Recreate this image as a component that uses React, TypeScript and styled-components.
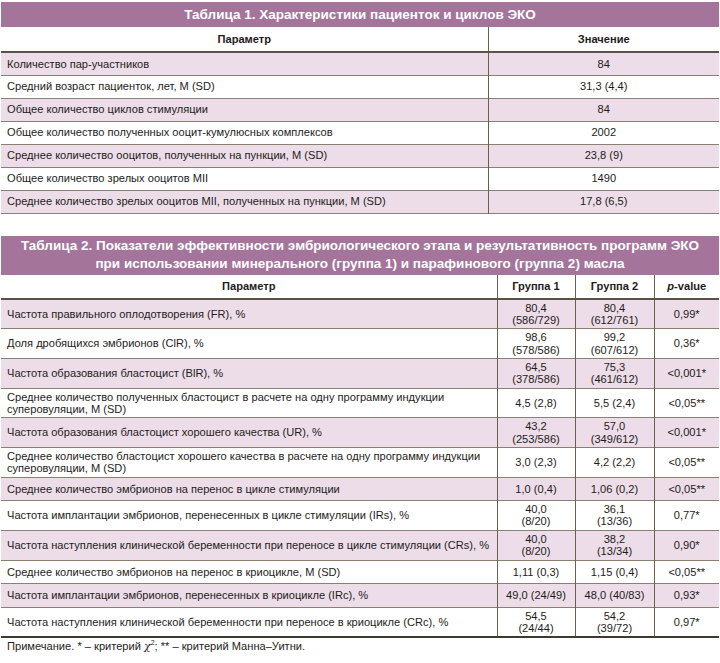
import React from 'react'
import styled, { createGlobalStyle } from 'styled-components'

const GlobalStyle = createGlobalStyle`
  html, body {
    margin: 0;
    padding: 0;
    background: #ffffff;
  }
  body {
    font-family: "Liberation Sans", Arial, sans-serif;
    color: #1e1c1a;
  }
`

const Page = styled.div`
  display: flex;
  flex-flow: column nowrap;
  gap: 22px;
  width: 718px;
  padding: 2px 0 0 1px;
`

const Block = styled.section`
  display: flex;
  flex-flow: column nowrap;
`

const TitleBar = styled.div<{ $lines: number }>`
  display: flex;
  flex-flow: column nowrap;
  justify-content: center;
  height: ${({ $lines }) => ($lines > 1 ? 39 : 25)}px;
  background-color: #a5749b;
  color: #ffffff;
  font-size: 13.5px;
  font-weight: bold;
  line-height: 18px;
  text-align: center;
`

const Table = styled.table`
  width: 100%;
  border-collapse: collapse;
  table-layout: fixed;
  font-size: 11.1px;
  line-height: 12.35px;
`

const HeadRow = styled.tr<{ $h: number }>`
  height: ${({ $h }) => $h}px;
  border-bottom: 2px solid #5b5247;
`

const HeadCell = styled.th<{ $last?: boolean }>`
  padding: 2px 6px;
  font-weight: bold;
  text-align: center;
  border-right: ${({ $last }) => ($last ? 'none' : '1.5px solid #6a6052')};
`

const Row = styled.tr<{ $pink: boolean; $h: number; $thick?: boolean }>`
  height: ${({ $h }) => $h}px;
  background-color: ${({ $pink }) => ($pink ? '#ecdde8' : '#ffffff')};
  border-bottom: ${({ $thick }) => ($thick ? '2px solid #3e3931' : '1.5px solid #8a8071')};
`

const ParamCell = styled.td`
  padding: 2px 4px 2px 6px;
  text-align: left;
  vertical-align: middle;
  border-right: 1.5px solid #6a6052;
`

const ValueCell = styled.td<{ $last?: boolean }>`
  padding: 2px 2px;
  text-align: center;
  vertical-align: middle;
  border-right: ${({ $last }) => ($last ? 'none' : '1.5px solid #6a6052')};
`

const Note = styled.p`
  margin: -24px 0 0 6px;
  font-size: 11.1px;
  line-height: 14px;
`

const Chi = styled.i`
  font-family: "DejaVu Serif", "Liberation Serif", serif;
  font-size: 11px;
`

const Sup = styled.sup`
  font-size: 7px;
`

const table1 = [
  ['Количество пар-участников', '84'],
  ['Средний возраст пациенток, лет, M (SD)', '31,3 (4,4)'],
  ['Общее количество циклов стимуляции', '84'],
  ['Общее количество полученных ооцит-кумулюсных комплексов', '2002'],
  ['Среднее количество ооцитов, полученных на пункции, M (SD)', '23,8 (9)'],
  ['Общее количество зрелых ооцитов MII', '1490'],
  ['Среднее количество зрелых ооцитов MII, полученных на пункции, M (SD)', '17,8 (6,5)'],
]

type Row2 = { param: string; g1: string[]; g2: string[]; p: string }

const table2: Row2[] = [
  { param: 'Частота правильного оплодотворения (FR), %', g1: ['80,4', '(586/729)'], g2: ['80,4', '(612/761)'], p: '0,99*' },
  { param: 'Доля дробящихся эмбрионов (ClR), %', g1: ['98,6', '(578/586)'], g2: ['99,2', '(607/612)'], p: '0,36*' },
  { param: 'Частота образования бластоцист (BlR), %', g1: ['64,5', '(378/586)'], g2: ['75,3', '(461/612)'], p: '<0,001*' },
  { param: 'Среднее количество полученных бластоцист в расчете на одну программу индукции суперовуляции, M (SD)', g1: ['4,5 (2,8)'], g2: ['5,5 (2,4)'], p: '<0,05**' },
  { param: 'Частота образования бластоцист хорошего качества (UR), %', g1: ['43,2', '(253/586)'], g2: ['57,0', '(349/612)'], p: '<0,001*' },
  { param: 'Среднее количество бластоцист хорошего качества в расчете на одну программу индукции суперовуляции, M (SD)', g1: ['3,0 (2,3)'], g2: ['4,2 (2,2)'], p: '<0,05**' },
  { param: 'Среднее количество эмбрионов на перенос в цикле стимуляции', g1: ['1,0 (0,4)'], g2: ['1,06 (0,2)'], p: '<0,05**' },
  { param: 'Частота имплантации эмбрионов, перенесенных в цикле стимуляции (IRs), %', g1: ['40,0', '(8/20)'], g2: ['36,1', '(13/36)'], p: '0,77*' },
  { param: 'Частота наступления клинической беременности при переносе в цикле стимуляции (CRs), %', g1: ['40,0', '(8/20)'], g2: ['38,2', '(13/34)'], p: '0,90*' },
  { param: 'Среднее количество эмбрионов на перенос в криоцикле, M (SD)', g1: ['1,11 (0,3)'], g2: ['1,15 (0,4)'], p: '<0,05**' },
  { param: 'Частота имплантации эмбрионов, перенесенных в криоцикле (IRc), %', g1: ['49,0 (24/49)'], g2: ['48,0 (40/83)'], p: '0,93*' },
  { param: 'Частота наступления клинической беременности при переносе в криоцикле (CRc), %', g1: ['54,5', '(24/44)'], g2: ['54,2', '(39/72)'], p: '0,97*' },
]

const Lines = ({ items }: { items: string[] }) => (
  <>
    {items.map((t, i) => (
      <React.Fragment key={i}>
        {i > 0 && <br />}
        {t}
      </React.Fragment>
    ))}
  </>
)

const App = () => {
  return (
    <Page>
      <GlobalStyle />
      <Block>
        <TitleBar $lines={1}>Таблица 1. Характеристики пациенток и циклов ЭКО</TitleBar>
        <Table>
          <colgroup>
            <col style={{ width: 487 }} />
            <col />
          </colgroup>
          <thead>
            <HeadRow $h={25}>
              <HeadCell>Параметр</HeadCell>
              <HeadCell $last>Значение</HeadCell>
            </HeadRow>
          </thead>
          <tbody>
            {table1.map(([param, value], i) => (
              <Row key={param} $pink={i % 2 === 0} $h={23}>
                <ParamCell>{param}</ParamCell>
                <ValueCell $last>{value}</ValueCell>
              </Row>
            ))}
          </tbody>
        </Table>
      </Block>

      <Block>
        <TitleBar $lines={2}>
          <span>Таблица 2. Показатели эффективности эмбриологического этапа и результативность программ ЭКО</span>
          <span>при использовании минерального (группа 1) и парафинового (группа 2) масла</span>
        </TitleBar>
        <Table>
          <colgroup>
            <col style={{ width: 496 }} />
            <col style={{ width: 78 }} />
            <col style={{ width: 79 }} />
            <col />
          </colgroup>
          <thead>
            <HeadRow $h={24}>
              <HeadCell>Параметр</HeadCell>
              <HeadCell>Группа 1</HeadCell>
              <HeadCell>Группа 2</HeadCell>
              <HeadCell $last>
                <i>p</i>-value
              </HeadCell>
            </HeadRow>
          </thead>
          <tbody>
            {table2.map((r, i) => (
              <Row key={r.param} $pink={i % 2 === 0} $h={23.5} $thick={i === table2.length - 1}>
                <ParamCell>{r.param}</ParamCell>
                <ValueCell>
                  <Lines items={r.g1} />
                </ValueCell>
                <ValueCell>
                  <Lines items={r.g2} />
                </ValueCell>
                <ValueCell $last>{r.p}</ValueCell>
              </Row>
            ))}
          </tbody>
        </Table>
      </Block>

      <Note>
        Примечание. * – критерий <Chi>χ</Chi>
        <Sup>2</Sup>; ** – критерий Манна–Уитни.
      </Note>
    </Page>
  )
}

export default App
